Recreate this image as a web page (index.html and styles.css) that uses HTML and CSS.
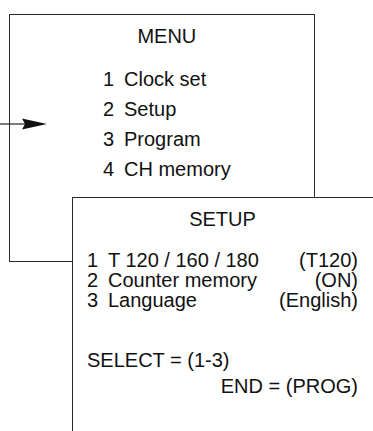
FILE: index.html
```html
<!DOCTYPE html>
<html>
<head>
    <title>Menu and Setup</title>
    <link rel="stylesheet" href="styles.css">
</head>
<body>
    <div class="diagram">
        <div class="menu-box">
            <div class="menu-inner">
                <div class="menu-title">MENU</div>
                <div class="menu-row"><span class="num">1</span>Clock set</div>
                <div class="menu-row"><span class="num">2</span>Setup</div>
                <div class="menu-row"><span class="num">3</span>Program</div>
                <div class="menu-row"><span class="num">4</span>CH memory</div>
            </div>
        </div>

        <div class="setup-box">
            <div class="setup-inner">
                <div class="setup-title">SETUP</div>
                <div class="setup-row">
                    <span class="num">1</span>
                    <span class="label">T 120 / 160 / 180</span>
                    <span class="value">(T120)</span>
                </div>
                <div class="setup-row">
                    <span class="num">2</span>
                    <span class="label">Counter memory</span>
                    <span class="value">(ON)</span>
                </div>
                <div class="setup-row">
                    <span class="num">3</span>
                    <span class="label">Language</span>
                    <span class="value">(English)</span>
                </div>
                <div class="select-line">SELECT = (1-3)</div>
                <div class="end-line">END = (PROG)</div>
            </div>
        </div>

        <!-- arrow pointing at "2 Setup" -->
        <svg class="pointer" width="48" height="16" viewBox="0 0 48 16">
            <line x1="0" y1="8" x2="26" y2="8" stroke="#222" stroke-width="1.2"/>
            <path d="M22 2.5 L47 8 L22 13.5 L25 8 Z" fill="#111"/>
        </svg>
    </div>
</body>
</html>
```

FILE: styles.css
```css
/* Basic styling for the diagram */
html, body {
    margin: 0;
    padding: 0;
    background-color: #fff;
    overflow: hidden;
}

body {
    font-family: 'Liberation Sans', Arial, sans-serif;
    font-size: 20px;
    color: #111;
    width: 373px;
    height: 431px;
}

.diagram {
    position: relative;
}

.menu-box {
    box-sizing: border-box;
    width: 306px;
    height: 248px;
    margin: 14px 0 0 9px;
    border: 1px solid #2a2a2a;
    padding: 6px 0 0 93px;
}

.menu-inner {
    display: inline-block;
}

.menu-title {
    text-align: center;
    line-height: 30px;
    margin-bottom: 13px;
}

.menu-row {
    line-height: 30px;
    white-space: nowrap;
}

.num {
    display: inline-block;
    width: 21px;
}

/* runs off the right and bottom edge of the picture */
.setup-box {
    position: relative;
    box-sizing: border-box;
    width: 301px;
    height: 234px;
    margin: -65px 0 0 72px;
    border: 1px solid #2a2a2a;
    border-right: none;
    border-bottom: none;
    background-color: #fff;
    padding: 11px 0 0 14px;
}

.setup-inner {
    width: 271px;
}

.setup-title {
    text-align: center;
    line-height: 20px;
    margin-bottom: 21px;
}

.setup-row {
    display: grid;
    grid-template-columns: 21px 1fr auto;
    line-height: 20px;
    white-space: nowrap;
}

.select-line {
    line-height: 26px;
    margin-top: 37px;
}

.end-line {
    line-height: 26px;
    text-align: right;
}

.pointer {
    position: absolute;
    left: 0;
    top: 102px;
}
```
